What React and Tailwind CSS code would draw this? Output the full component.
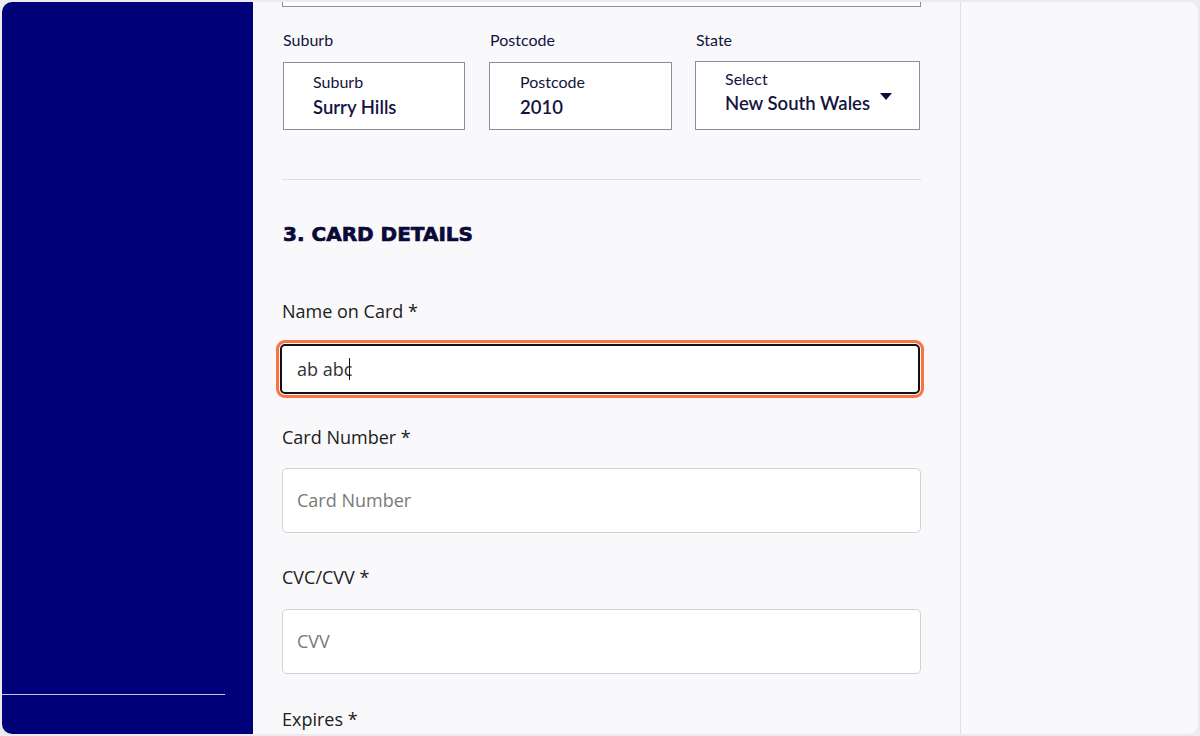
import React from "react";

const lato = { fontFamily: "Lato, 'Noto Sans', sans-serif" };
const ui = { fontFamily: "'Open Sans', 'Noto Sans', sans-serif" };

const AddressBox = ({ label, value, className }) => (
  <div className={"bg-white border border-[#8c8c9c] h-[68px] pl-[29px] pt-[9px] " + className}>
    <div className="text-[16px] leading-5 text-[#141440]">{label}</div>
    <div className="mt-[4px] text-[18.5px] leading-[22px] font-semibold text-[#141440]">{value}</div>
  </div>
);

const Field = ({ label, placeholder }) => (
  <div>
    <div className="mt-8 text-[18px] leading-6 font-medium text-[#202020]" style={ui}>
      {label}
    </div>
    <div className="mt-5 h-[65px] bg-white border border-[#d2d2d6] rounded-[5px] flex items-center pl-[14px]">
      <span className="text-[18px] text-[#7a7a7a]" style={ui}>{placeholder}</span>
    </div>
  </div>
);

export default function App() {
  return (
    <div className="w-[1200px] h-[736px] bg-[#ececee] p-[2px] overflow-hidden">
      <div className="w-full h-full rounded-[10px] overflow-hidden flex bg-[#f9f9fb]">
        {/* sidebar */}
        <aside className="w-[251px] shrink-0 bg-[#000078] flex flex-col">
          <div className="flex-1" />
          <div className="h-px w-[223px] bg-[#c8c8dc] mb-[39px]" />
        </aside>

        {/* form column */}
        <main className="w-[707px] shrink-0 pl-[29px] overflow-hidden" style={lato}>
          <div className="w-[639px]">
            <div className="h-[5px] border-x border-b border-[#8c8c9c] bg-white" />

            <div className="mt-[23px] grid grid-cols-[182px_183px_225px] gap-x-[24px] pl-px">
              <div className="text-[16px] leading-5 text-[#141440]">Suburb</div>
              <div className="text-[16px] leading-5 text-[#141440] pl-px">Postcode</div>
              <div className="text-[16px] leading-5 text-[#141440]">State</div>
            </div>

            <div className="mt-[11px] flex gap-[24px] items-end pl-px">
              <AddressBox label="Suburb" value="Surry Hills" className="w-[182px]" />
              <AddressBox label="Postcode" value="2010" className="w-[183px] !pl-[30px]" />
              <div className="-ml-px w-[225px] h-[69px] bg-white border border-[#8c8c9c] pl-[29px] pr-[27px] pt-[9px] flex items-end justify-between pb-[15px]">
                <div>
                  <div className="text-[16px] leading-5 text-[#141440]">Select</div>
                  <div className="mt-[3px] text-[18.5px] leading-[22px] font-semibold text-[#141440] whitespace-nowrap">New South Wales</div>
                </div>
                <svg width="12" height="7" viewBox="0 0 12 7" className="mb-[14px]">
                  <path d="M0 0h12L6 7z" fill="#0c0c3a" />
                </svg>
              </div>
            </div>

            <div className="mt-[49px] h-px bg-[#dedee4]" />

            <h2
              className="mt-[40px] text-[20px] leading-7 font-bold text-[#0a0a38] pl-px [-webkit-text-stroke:0.7px_#0a0a38]"
              style={{ fontFamily: "'DejaVu Sans', sans-serif" }}
            >
              3. CARD DETAILS
            </h2>

            <div className="mt-[51px] text-[18px] leading-6 font-medium text-[#202020]" style={ui}>
              Name on Card *
            </div>
            <div className="mt-[21px] -ml-[2px] w-[640px] h-[50px] bg-white border-2 border-[#111] rounded-[5px] outline-[3px] outline-offset-[1px] outline-[#ff7043] flex items-center pl-[15px]">
              <span className="text-[18px] text-[#333]" style={ui}>ab abc</span>
              <span className="w-px h-[22px] bg-[#111] -ml-[3px]" />
            </div>

            <div className="mt-[31px] text-[18px] leading-6 font-medium text-[#202020]" style={ui}>
              Card Number *
            </div>
            <div className="mt-[19px] h-[65px] bg-white border border-[#d2d2d6] rounded-[5px] flex items-center pl-[14px]">
              <span className="text-[18px] text-[#7a7a7a]" style={ui}>Card Number</span>
            </div>

            <Field label="CVC/CVV *" placeholder="CVV" />

            <div className="mt-[33px] text-[18px] leading-6 font-medium text-[#202020]" style={ui}>
              Expires *
            </div>
          </div>
        </main>

        <div className="w-px shrink-0 bg-[#e2e2e6]" />
        <section className="flex-1 bg-[#f9f9fb]" />
      </div>
    </div>
  );
}
